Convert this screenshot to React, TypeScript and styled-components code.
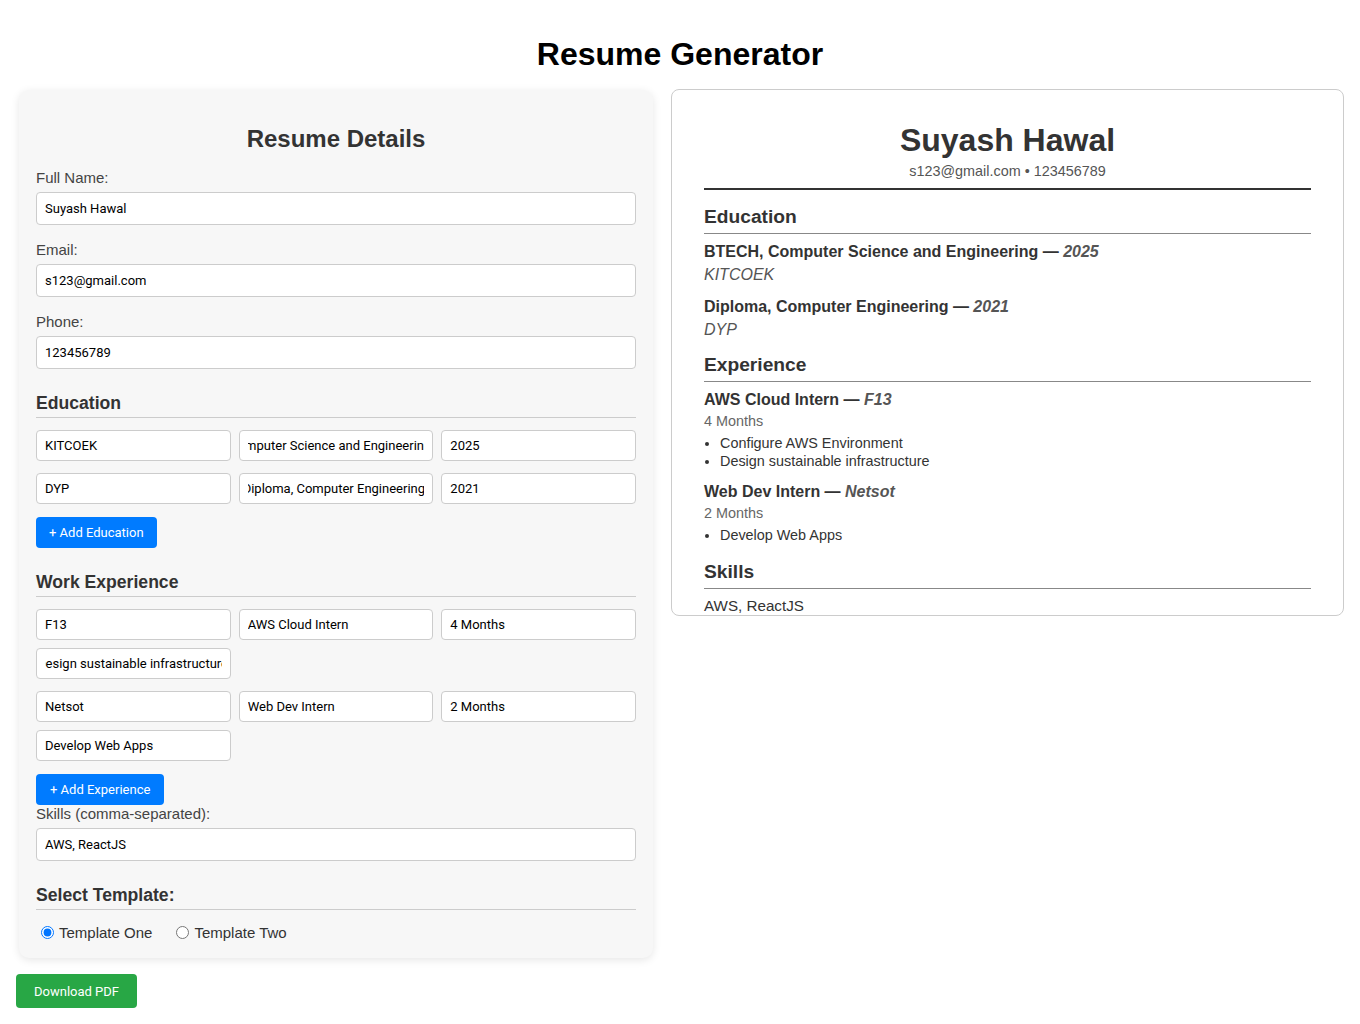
import React, { useEffect, useRef } from "react";
import styled, { createGlobalStyle } from "styled-components";

const Global = createGlobalStyle`
  html, body { margin: 0; padding: 0; background: #fff; }
  body { font-family: "Liberation Sans", Arial, sans-serif; color: #000; }
  * { box-sizing: border-box; }
`;

const Page = styled.div`
  padding: 16px;
`;

const Title = styled.h1`
  margin: 20px 0 16px;
  font-size: 32px;
  line-height: 37px;
  font-weight: 700;
  text-align: center;
  color: #000;
`;

const Row = styled.div`
  display: flex;
  align-items: flex-start;
  gap: 18px;
  padding-left: 3px;
`;

const FormPanel = styled.div`
  flex: 0 0 634px;
  margin-top: 1px;
  background: #f7f7f7;
  border-radius: 10px;
  box-shadow: 0 2px 8px rgba(0, 0, 0, 0.1);
  padding: 17px 17px 17px;
`;

const PanelTitle = styled.h2`
  margin: 18px 0 16px;
  font-size: 24px;
  line-height: 28px;
  text-align: center;
  color: #333;
`;

const Label = styled.label`
  display: block;
  font-size: 15px;
  line-height: 17px;
  color: #444;
  margin-bottom: 6px;
`;

const TextInput = styled.input<{ $h?: number }>`
  display: block;
  width: 100%;
  height: ${(p) => p.$h ?? 33}px;
  padding: 0 8px;
  border: 1px solid #ccc;
  border-radius: 4px;
  background: #fff;
  font-family: Roboto, "Noto Sans", sans-serif;
  font-size: 13px;
  color: #000;
  outline: none;
`;

const Field = styled.div`
  margin-bottom: 16px;
`;

const SectionHeading = styled.h3`
  margin: 24px 0 12px;
  padding-bottom: 3px;
  border-bottom: 1px solid #ccc;
  font-size: 17.6px;
  line-height: 21px;
  color: #333;
`;

const Grid3 = styled.div<{ $mb: number }>`
  display: grid;
  grid-template-columns: repeat(3, 1fr);
  gap: 8px;
  margin-bottom: ${(p) => p.$mb}px;
`;

const ActionButton = styled.button<{ $color: string; $h: number; $px: number }>`
  display: inline-flex;
  align-items: center;
  height: ${(p) => p.$h}px;
  padding: 0 ${(p) => p.$px}px;
  border: none;
  border-radius: 4px;
  background: ${(p) => p.$color};
  color: #fff;
  font-family: Roboto, "Noto Sans", sans-serif;
  font-size: 13px;
  cursor: pointer;
`;

const ButtonRow = styled.div`
  margin-top: 13px;
`;

const RadioRow = styled.div`
  display: flex;
  align-items: center;
  margin-top: 14px;
  font-size: 15px;
  line-height: 17px;
  color: #333;
`;

const RadioLabel = styled.label`
  display: inline-flex;
  align-items: center;
  margin-right: 19px;
  input {
    margin: 0 5px 0 5px;
    width: 13px;
    height: 13px;
  }
`;

const DownloadWrap = styled.div`
  margin-top: 16px;
`;

const Preview = styled.div`
  flex: 1;
  background: #fff;
  border: 1px solid #ccc;
  border-radius: 8px;
  padding: 32px 32px 0;
  color: #333;
`;

const Header = styled.div`
  text-align: center;
  padding-bottom: 8px;
  border-bottom: 2px solid #333;
`;

const Name = styled.h1`
  margin: 0;
  font-size: 32px;
  line-height: 37px;
  color: #333;
`;

const Contact = styled.div`
  margin-top: 4px;
  font-size: 14.4px;
  line-height: 17px;
  color: #555;
`;

const Section = styled.section<{ $mt: number }>`
  margin-top: ${(p) => p.$mt}px;
`;

const PreviewHeading = styled.h2`
  margin: 0 0 8px;
  padding-bottom: 5px;
  border-bottom: 1px solid #888;
  font-size: 19.2px;
  line-height: 22px;
  color: #333;
`;

const Item = styled.div<{ $gap: number }>`
  & + & {
    margin-top: ${(p) => p.$gap}px;
  }
`;

const ItemTitle = styled.div`
  font-size: 16px;
  line-height: 20px;
  font-weight: 700;
  color: #333;
  em {
    color: #555;
  }
`;

const ItemSub = styled.div`
  margin-top: 3px;
  font-size: 16px;
  line-height: 20px;
  font-style: italic;
  color: #555;
`;

const Duration = styled.div`
  margin-top: 2px;
  font-size: 14.4px;
  line-height: 18px;
  color: #666;
`;

const Bullets = styled.ul`
  margin: 4px 0 0;
  padding-left: 16px;
  font-size: 14.4px;
  line-height: 18px;
  color: #333;
`;

const SkillsText = styled.div`
  margin-top: 7px;
  font-size: 15.2px;
  line-height: 18px;
  color: #333;
`;

type ScrollMode = "start" | "end";

function ScrolledInput({ value, h, mode, offset }: { value: string; h?: number; mode: ScrollMode; offset: number }) {
  const ref = useRef<HTMLInputElement>(null);
  useEffect(() => {
    const el = ref.current;
    if (!el) return;
    const max = el.scrollWidth - el.clientWidth;
    el.scrollLeft = mode === "end" ? Math.max(0, max - offset) : Math.min(max, offset);
  }, [mode, offset]);
  return <TextInput ref={ref} $h={h} defaultValue={value} />;
}

const education = [
  { school: "KITCOEK", degree: "BTECH, Computer Science and Engineering", year: "2025", mode: "end" as ScrollMode, off: 6 },
  { school: "DYP", degree: "Diploma, Computer Engineering", year: "2021", mode: "start" as ScrollMode, off: 5 },
];

const experience = [
  {
    company: "F13",
    role: "AWS Cloud Intern",
    duration: "4 Months",
    resp: ["Configure AWS Environment", "Design sustainable infrastructure"],
    mode: "end" as ScrollMode,
    off: 6,
  },
  {
    company: "Netsot",
    role: "Web Dev Intern",
    duration: "2 Months",
    resp: ["Develop Web Apps"],
    mode: "start" as ScrollMode,
    off: 0,
  },
];

export default function App() {
  return (
    <>
      <Global />
      <Page>
        <Title>Resume Generator</Title>
        <Row>
          <FormPanel>
            <PanelTitle>Resume Details</PanelTitle>
            <Field>
              <Label>Full Name:</Label>
              <TextInput defaultValue="Suyash Hawal" />
            </Field>
            <Field>
              <Label>Email:</Label>
              <TextInput defaultValue="s123@gmail.com" />
            </Field>
            <Field>
              <Label>Phone:</Label>
              <TextInput defaultValue="123456789" />
            </Field>

            <SectionHeading>Education</SectionHeading>
            {education.map((e, i) => (
              <Grid3 key={e.school} $mb={i === education.length - 1 ? 0 : 12}>
                <TextInput $h={31} defaultValue={e.school} />
                <ScrolledInput h={31} value={e.degree} mode={e.mode} offset={e.off} />
                <TextInput $h={31} defaultValue={e.year} />
              </Grid3>
            ))}
            <ButtonRow>
              <ActionButton $color="#007bff" $h={31} $px={13}>+ Add Education</ActionButton>
            </ButtonRow>

            <SectionHeading>Work Experience</SectionHeading>
            {experience.map((x, i) => (
              <div key={x.company}>
                <Grid3 $mb={8}>
                  <TextInput $h={31} defaultValue={x.company} />
                  <TextInput $h={31} defaultValue={x.role} />
                  <TextInput $h={31} defaultValue={x.duration} />
                </Grid3>
                <Grid3 $mb={i === experience.length - 1 ? 0 : 12}>
                  <ScrolledInput h={31} value={x.resp.join(", ")} mode={x.mode} offset={x.off} />
                </Grid3>
              </div>
            ))}
            <ButtonRow>
              <ActionButton $color="#007bff" $h={31} $px={14}>+ Add Experience</ActionButton>
            </ButtonRow>

            <Field>
              <Label>Skills (comma-separated):</Label>
              <TextInput defaultValue="AWS, ReactJS" />
            </Field>

            <SectionHeading>Select Template:</SectionHeading>
            <RadioRow>
              <RadioLabel>
                <input type="radio" name="tpl" defaultChecked />
                Template One
              </RadioLabel>
              <RadioLabel>
                <input type="radio" name="tpl" />
                Template Two
              </RadioLabel>
            </RadioRow>
          </FormPanel>

          <Preview>
            <Header>
              <Name>Suyash Hawal</Name>
              <Contact>s123@gmail.com • 123456789</Contact>
            </Header>

            <Section $mt={16}>
              <PreviewHeading>Education</PreviewHeading>
              {education.map((e) => (
                <Item key={e.school} $gap={11}>
                  <ItemTitle>
                    {e.degree} — <em>{e.year}</em>
                  </ItemTitle>
                  <ItemSub>{e.school}</ItemSub>
                </Item>
              ))}
            </Section>

            <Section $mt={14}>
              <PreviewHeading>Experience</PreviewHeading>
              {experience.map((x) => (
                <Item key={x.company} $gap={12}>
                  <ItemTitle>
                    {x.role} — <em>{x.company}</em>
                  </ItemTitle>
                  <Duration>{x.duration}</Duration>
                  <Bullets>
                    {x.resp.map((r) => (
                      <li key={r}>{r}</li>
                    ))}
                  </Bullets>
                </Item>
              ))}
            </Section>

            <Section $mt={17}>
              <PreviewHeading>Skills</PreviewHeading>
              <SkillsText>AWS, ReactJS</SkillsText>
            </Section>
          </Preview>
        </Row>
        <DownloadWrap>
          <ActionButton $color="#28a745" $h={34} $px={18}>Download PDF</ActionButton>
        </DownloadWrap>
      </Page>
    </>
  );
}
